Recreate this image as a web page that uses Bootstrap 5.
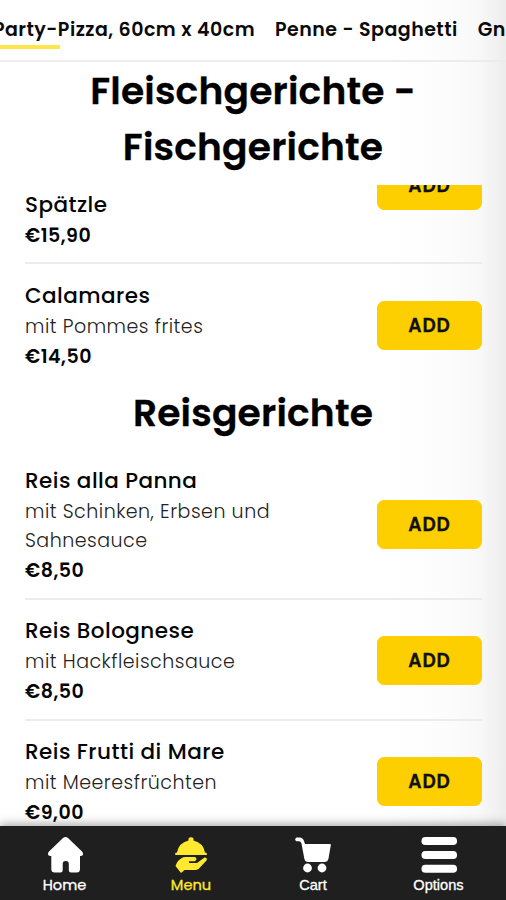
<!DOCTYPE html>
<html lang="de">
<head>
<meta charset="utf-8">
<meta name="viewport" content="width=device-width, initial-scale=1">
<title>Menu</title>
<link rel="stylesheet" href="https://cdn.jsdelivr.net/npm/bootstrap@5.3.0/dist/css/bootstrap.min.css">
<style>
body{font-family:Poppins,Inter,"Open Sans",sans-serif;color:#050505;background:#fff}
.screen{height:900px;background:linear-gradient(90deg,#fff 390px,#fcfcfc 450px,#f8f8f8 480px,#ededed 506px)}
.categories{height:62px;border-bottom:2px solid #ececec;padding-top:1px}
.categories .nav{margin-left:-7px;gap:20px}
.categories .nav-link{color:#0a0a0a;font-size:19px;font-weight:600;letter-spacing:.47px}
.categories .nav-link.active::after{content:"";position:absolute;left:0;bottom:-4px;width:67px;height:4px;background:#fde54a}
.section-title{font-size:37.6px;font-weight:600;line-height:56px;letter-spacing:.2px;color:#000;-webkit-text-stroke:.3px #000}
.title-first{height:123px;padding-top:1px}
.title-second{padding:1px 0 7.5px}
.dish{padding:16px 0 13px;margin:0 24px 0 25px}
.dish + .dish{border-top:2px solid #ececec;padding-top:15px}
.dish-clipped{margin-top:-81px;padding-bottom:12px}
.dish-clipped + .dish{padding-top:16px}
.dish-clipped .dish-text{height:130px}
.dish-name{font-size:21.5px;line-height:32px;font-weight:500;letter-spacing:.45px}
.dish-info{font-size:19px;line-height:29.5px;font-weight:300;letter-spacing:.5px;color:#222}
.dish-price{font-size:19px;line-height:29.5px;font-weight:600;letter-spacing:.5px}
.dish-text{width:275px}
.btn-add{--bs-btn-bg:#fecf00;--bs-btn-color:#111;--bs-btn-border-color:#fecf00;--bs-btn-border-radius:7px;--bs-btn-font-size:18.5px;--bs-btn-font-weight:600;--bs-btn-padding-y:0;letter-spacing:.9px;-webkit-text-stroke:.3px #111;padding-top:1px;width:105px;height:49px}
.tabbar{height:74px;background:#1f1f20;box-shadow:0 -2px 9px rgba(0,0,0,.35);display:grid;grid-template-columns:129px 124px 120px 131px}
.tabbar a{color:#fff;font:14.6px/16px "Liberation Sans",Arial,sans-serif;padding-top:9px;-webkit-text-stroke:.3px currentColor}
.tabbar .round-label{font-family:Poppins,Inter,sans-serif;font-size:14.6px}
.tabbar a.active{color:#ffe92e}
.tabbar svg{margin-bottom:4px}
</style>
<script src="https://cdn.jsdelivr.net/npm/bootstrap@5.3.0/dist/js/bootstrap.bundle.min.js"></script>
</head>
<body>
<div class="screen d-flex flex-column overflow-hidden">
  <header class="categories d-flex align-items-center flex-shrink-0">
    <nav class="nav flex-nowrap text-nowrap">
      <a class="nav-link active p-0 position-relative" href="#">Party-Pizza, 60cm x 40cm</a>
      <a class="nav-link p-0" href="#">Penne - Spaghetti</a>
      <a class="nav-link p-0" href="#">Gnocchi</a>
    </nav>
  </header>
  <h2 class="section-title title-first text-center m-0 flex-shrink-0">Fleischgerichte -<br>Fischgerichte</h2>
  <main class="flex-grow-1 overflow-hidden">
    <article class="dish dish-clipped d-flex justify-content-between align-items-center">
      <div class="dish-text d-flex flex-column justify-content-end"><div class="dish-name">Spätzle</div><div class="dish-price">€15,90</div></div>
      <button class="btn btn-add">ADD</button>
    </article>
    <article class="dish d-flex justify-content-between align-items-center">
      <div class="dish-text"><div class="dish-name">Calamares</div><div class="dish-info">mit Pommes frites</div><div class="dish-price">€14,50</div></div>
      <button class="btn btn-add">ADD</button>
    </article>
    <h2 class="section-title title-second text-center m-0">Reisgerichte</h2>
    <article class="dish d-flex justify-content-between align-items-center">
      <div class="dish-text"><div class="dish-name">Reis alla Panna</div><div class="dish-info">mit Schinken, Erbsen und Sahnesauce</div><div class="dish-price">€8,50</div></div>
      <button class="btn btn-add">ADD</button>
    </article>
    <article class="dish d-flex justify-content-between align-items-center">
      <div class="dish-text"><div class="dish-name">Reis Bolognese</div><div class="dish-info">mit Hackfleischsauce</div><div class="dish-price">€8,50</div></div>
      <button class="btn btn-add">ADD</button>
    </article>
    <article class="dish d-flex justify-content-between align-items-center">
      <div class="dish-text"><div class="dish-name">Reis Frutti di Mare</div><div class="dish-info">mit Meeresfrüchten</div><div class="dish-price">€9,00</div></div>
      <button class="btn btn-add">ADD</button>
    </article>
  </main>
  <footer class="tabbar position-relative flex-shrink-0">
    <a class="d-flex flex-column align-items-center text-decoration-none round-label" href="#">
      <svg width="38" height="38" viewBox="0 0 38 38" fill="currentColor"><path d="M17 3q2.500-2 5 0L36 16.500q2.500 3.300-.8 4.500H34V34q0 3.500-3.500 3.500H25q-2.200 0-2.200-2.200V28.500q0-2.500-2.300-2.500h-1.500q-2.300 0-2.300 2.500v6.800q0 2.200-2.200 2.200H8.800Q5.300 37.500 5.300 34V21H4q-3.500-1.200-1-4.500z"/></svg>Home</a>
    <a class="active d-flex flex-column align-items-center text-decoration-none round-label" href="#">
      <svg width="38" height="38" viewBox="0 0 38 38" fill="currentColor"><path d="M16.500 5.500q-.5-3.300 2.500-3.300t2.500 3.300Q31.500 8 33 17.500l1.800.5v2H3.200v-2l1.800-.5Q6.500 8 16.500 5.500zM5 27.500q4-5.500 8.500-5.500H23q3 2 0 4.200h-6V28h8l7.500-5.500q3.300.2 2 3L26.500 34q-1.500 1-3.500 1H12.500L9 38 3.500 31z"/></svg>Menu</a>
    <a class="d-flex flex-column align-items-center text-decoration-none" href="#">
      <svg width="38" height="38" viewBox="0 0 38 38" fill="currentColor"><path d="M2.500 2.500H5.500q3.500 0 4.500 3.500l1 3H36q1 0 .8 1.300L34.500 23.500q-.8 3.500-4 3.500H14.500q-3.600 0-4.200-3.500L7.500 8.500Q7 6.300 5 6.300H2.500q-2.700-1.900 0-3.800z"/><circle cx="13.500" cy="33" r="4.400"/><circle cx="28" cy="33" r="4.400"/></svg>Cart</a>
    <a class="d-flex flex-column align-items-center text-decoration-none" href="#">
      <svg width="38" height="38" viewBox="0 0 38 38" fill="currentColor"><rect x="1.500" y="2" width="35.500" height="8" rx="3.800"/><rect x="1.500" y="16" width="35.500" height="8" rx="3.800"/><rect x="1.500" y="29.800" width="35.500" height="8" rx="3.800"/></svg>Options</a>
  </footer>
</div>
</body>
</html>
